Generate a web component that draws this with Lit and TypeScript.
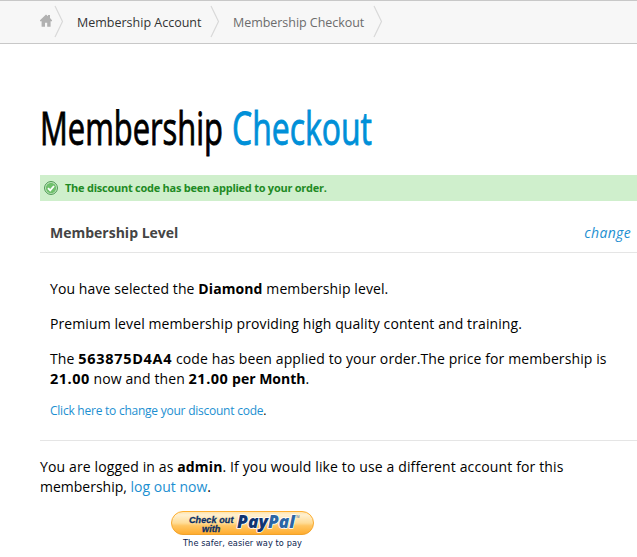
import { LitElement, html, css, svg } from "lit";
import { customElement } from "lit/decorators.js";

const chevron = html`<svg class="chev" width="10" height="34" viewBox="0 0 10 34">
  <path d="M1 1 L8.5 16.5 L1 32" fill="none" stroke="#d9d9d9" stroke-width="1.2" />
</svg>`;

@customElement("paypal-button")
class PaypalButton extends LitElement {
  static styles = css`
    :host { display: block; width: 143px; }
    svg { display: block; }
    .bold { font: italic bold 9.5px "Liberation Sans", Arial, sans-serif; stroke: #0a2f66; stroke-width: 0.3px; }
    .brand { font: italic 800 17px "Open Sans", sans-serif; }
    .tm { font: 3px "Liberation Sans", sans-serif; }
    .cap { font: 9px "DejaVu Sans", Verdana, sans-serif; }
  `;
  render() {
    return html`<svg width="143" height="38" viewBox="0 0 143 38">
      <defs>
        <linearGradient id="g" x1="0" y1="0" x2="0" y2="1">
          <stop offset="0" stop-color="#ffe2a8" />
          <stop offset="0.15" stop-color="#fff0d0" />
          <stop offset="0.5" stop-color="#ffdc96" />
          <stop offset="0.62" stop-color="#ffc663" />
          <stop offset="1" stop-color="#ffab2c" />
        </linearGradient>
        <linearGradient id="e" x1="0" y1="0" x2="0" y2="1">
          <stop offset="0" stop-color="#ffb031" />
          <stop offset="1" stop-color="#f0a22c" />
        </linearGradient>
      </defs>
      <rect x="0.5" y="0.5" width="142" height="23" rx="11.5" fill="url(#g)" stroke="url(#e)" />
      ${svg`<g fill="#0a2f66">
        <text class="bold" x="18" y="12" textLength="44.5" lengthAdjust="spacingAndGlyphs">Check out</text>
        <text class="bold" x="31" y="21.3" textLength="18.5" lengthAdjust="spacingAndGlyphs">with</text>
      </g>
      <g stroke="#fff" stroke-width="1.6" stroke-linejoin="round" paint-order="stroke">
        <text class="brand" x="66" y="17" fill="#0f3572" textLength="31" lengthAdjust="spacingAndGlyphs">Pay</text>
        <text class="brand" x="97" y="17" fill="#2b66a5" textLength="27" lengthAdjust="spacingAndGlyphs">Pal</text>
      </g>
      <text class="tm" x="124" y="7" fill="#2b66a5">TM</text>
      <text class="cap" x="12" y="35" fill="#0a2350" textLength="119" lengthAdjust="spacingAndGlyphs">The safer, easier way to pay</text>`}
    </svg>`;
  }
}

@customElement("app-root")
class AppRoot extends LitElement {
  static styles = css`
    :host {
      display: block; height: 557px; overflow: hidden; background: #fff; color: #000;
      font: 14px/20px "Open Sans", "Noto Sans", sans-serif; letter-spacing: 0.1px;
    }
    a { color: #1c8fd1; text-decoration: none; }
    .crumbs {
      box-sizing: border-box; height: 44px; display: flex; align-items: center;
      background: #f7f7f7; border-top: 1px solid #c8c8c8; border-bottom: 1px solid #c8c8c8;
      padding-left: 40px; font-size: 12.5px; white-space: nowrap; color: #6c6c6c; letter-spacing: 0;
    }
    .crumb { padding-top: 1px; }
    .home { display: block; margin-bottom: 3px; }
    .chev { display: block; margin-left: 2px; }
    .crumb.one { width: 124px; margin-left: 13px; color: #333; }
    .crumb.two { width: 132px; margin-left: 13px; letter-spacing: -0.04px; }
    .crumb.one + .chev { margin-left: 9px; }
    .crumb.two + .chev { margin-left: 8px; }
    .title { display: block; overflow: visible; margin: 56px 0 0 40px; height: 64px; width: 340px; }
    .title text { font: 46px "Open Sans", sans-serif; letter-spacing: 0; stroke-width: 0.9px; }
    .black { fill: #000; stroke: #000; }
    .blue { fill: #0090d8; stroke: #0090d8; }
    .content { margin-left: 40px; }
    .notice {
      display: flex; align-items: center; height: 26px; margin-top: 11px; padding-left: 4px; gap: 7px;
      background: #cfefcc; color: #1e8a24; font-size: 11px; font-weight: 700; white-space: nowrap;
      letter-spacing: -0.25px;
    }
    .heading {
      display: flex; justify-content: space-between; height: 51px; padding: 0 6px 0 10px;
      border-bottom: 1px solid #e5e5e5; line-height: 64px; color: #444; white-space: nowrap;
    }
    .heading b { letter-spacing: 0; }
    .heading a { font-style: italic; letter-spacing: 0.35px; }
    .box { padding: 26px 0 19px 10px; border-bottom: 1px solid #e5e5e5; white-space: nowrap; }
    p { margin: 0 0 15px; }
    .code, .num { font-size: 14.5px; line-height: 1; }
    .code { letter-spacing: 0.7px; }
    .num { letter-spacing: 0.5px; }
    .per { letter-spacing: 0; }
    .small { font-size: 12px; letter-spacing: -0.24px; margin: -3px 0 0; }
    .login { margin: 16px 0 0; white-space: nowrap; letter-spacing: 0.13px; }
    .member { letter-spacing: 0; }
    paypal-button { margin: 14px 0 0 131px; }
  `;
  render() {
    return html`
      <nav class="crumbs">
        <svg class="home" width="12" height="13" viewBox="0 0 12 13">
          <path fill="#b1b1b1" d="M6 0.4 L8 2.2 V1 H10 V4 L12 6.2 V7.2 H10.6 V12.8 H7.2 V8.8 H5 V12.8 H1.6 V7.2 H0 V6.2 Z" />
        </svg>
        ${chevron}<span class="crumb one">Membership Account</span>
        ${chevron}<span class="crumb two">Membership Checkout</span>${chevron}
      </nav>
      <svg class="title" viewBox="0 0 340 64">
        <text class="black" x="0" y="45" textLength="183" lengthAdjust="spacingAndGlyphs">Membership</text>
        <text class="blue" x="192" y="45" textLength="140" lengthAdjust="spacingAndGlyphs">Checkout</text>
      </svg>
      <main class="content">
        <div class="notice">
          <svg width="14" height="14" viewBox="0 0 14 14">
            <circle cx="7" cy="7" r="6.4" fill="#d9f2d6" stroke="#3f9046" />
            <circle cx="7" cy="7" r="5.2" fill="#6fc06c" />
            <path d="M4 7.2 L6.2 9.4 L10 5" fill="none" stroke="#fff" stroke-width="1.9" />
          </svg>
          <span>The discount code has been applied to your order.</span>
        </div>
        <div class="heading"><b>Membership Level</b><a>change</a></div>
        <section class="box">
          <p>You have selected the <b>Diamond</b> membership level.</p>
          <p>Premium level membership providing high quality content and training.</p>
          <p>The <b class="code">563875D4A4</b> code has been applied to your order.The price for membership is<br /><b class="num">21.00</b> now and then <b><span class="num">21.00</span><span class="per"> per Month</span></b>.</p>
          <p class="small"><a>Click here to change your discount code</a>.</p>
        </section>
        <p class="login">You are logged in as <b>admin</b>. If you would like to use a different account for this<br /><span class="member">membership, <a>log out now</a>.</span></p>
        <paypal-button></paypal-button>
      </main>
    `;
  }
}
